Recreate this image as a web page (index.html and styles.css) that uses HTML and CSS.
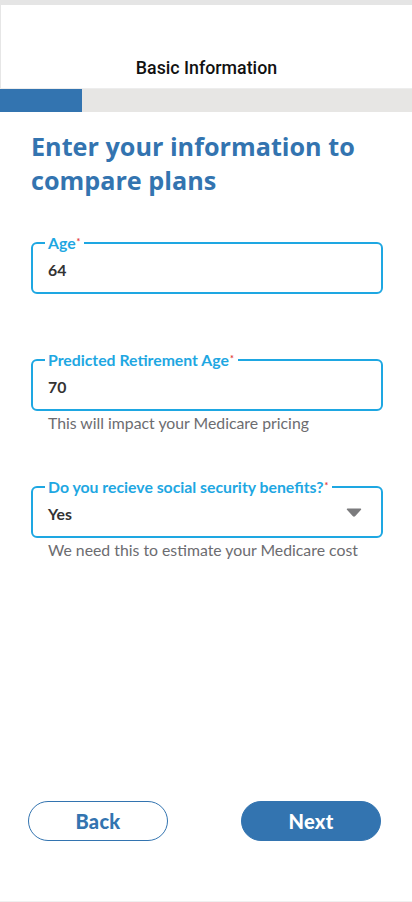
FILE: index.html
```html
<!DOCTYPE html>
<html lang="en">
<head>
<meta charset="utf-8">
<title>Basic Information</title>
<link rel="stylesheet" href="styles.css">
</head>
<body>
<div class="page">
  <div class="topstrip"></div>
  <header class="header"><h1 class="header-title">Basic Information</h1></header>
  <div class="progress"><div class="progress-fill" style="width:82px"></div></div>
  <main class="content">
    <h2 class="heading">Enter your information to compare plans</h2>
    <div class="group group-first">
      <div class="field">
        <span class="label">Age<sup class="req">*</sup></span>
        <span class="value">64</span>
      </div>
    </div>
    <div class="group group-second">
      <div class="field">
        <span class="label">Predicted Retirement Age<sup class="req">*</sup></span>
        <span class="value">70</span>
      </div>
      <p class="helper">This will impact your Medicare pricing</p>
    </div>
    <div class="group group-third">
      <div class="field field-select">
        <span class="label">Do you recieve social security benefits?<sup class="req">*</sup></span>
        <span class="value">Yes</span>
        <svg class="caret" width="16" height="9" viewBox="0 0 16 9"><path d="M1.5 1.2 H14.5 L8.8 7.6 Q8 8.4 7.2 7.6 Z" fill="#7b7b7d" stroke="#7b7b7d" stroke-width="1.4" stroke-linejoin="round"/></svg>
      </div>
      <p class="helper">We need this to estimate your Medicare cost</p>
    </div>
  </main>
  <footer class="actions">
    <button class="btn btn-outline">Back</button>
    <button class="btn btn-fill">Next</button>
  </footer>
  <div class="bottomline"></div>
</div>
</body>
</html>
```

FILE: styles.css
```css
html, body {
  margin: 0;
  padding: 0;
  background: #ffffff;
}
.page {
  width: 412px;
  height: 902px;
  display: flex;
  flex-direction: column;
  box-sizing: border-box;
}
.topstrip {
  height: 5px;
  background: #e5e5e5;
}
.header {
  height: 83px;
  display: flex;
  align-items: flex-end;
  justify-content: center;
  border-left: 1px solid #e6e6e6;
  box-sizing: border-box;
}
.header-title {
  margin: 0 0 9px 0;
  font-family: Roboto, "Liberation Sans", sans-serif;
  font-weight: 500;
  font-size: 17.8px;
  line-height: 22px;
  color: #111111;
}
.progress {
  height: 24px;
  background: #e7e6e4;
  display: flex;
  border-top: 1px solid #ededed;
  box-sizing: border-box;
}
.progress-fill {
  height: 100%;
  background: #3374b0;
}
.content {
  padding: 17px 29px 0 31px;
}
.heading {
  margin: 0;
  font-family: "Open Sans", Lato, sans-serif;
  font-weight: 700;
  font-size: 25.2px;
  line-height: 34px;
  letter-spacing: 0;
  color: #3374b0;
}
.group-first { margin-top: 45px; }
.group-second { margin-top: 65px; }
.group-third { margin-top: 54px; }
.field {
  position: relative;
  height: 52px;
  border: 2px solid #1ea7e2;
  border-radius: 6px;
  box-sizing: border-box;
  display: flex;
  align-items: center;
  padding: 0 15px;
}
.label {
  position: absolute;
  top: -11px;
  left: 12px;
  padding: 0 4px 0 3px;
  background: #ffffff;
  font-family: Lato, "Open Sans", sans-serif;
  font-weight: 700;
  font-size: 15.8px;
  line-height: 19px;
  color: #1ea7e2;
}
.req {
  color: #e23b3b;
  font-size: 9px;
  vertical-align: top;
  position: relative;
  top: -1px;
  margin-left: 1px;
}
.value {
  font-family: Lato, "Open Sans", sans-serif;
  font-weight: 700;
  font-size: 15.8px;
  color: #333333;
  padding-top: 2px;
}
.field-select {
  justify-content: space-between;
}
.caret {
  margin-right: 4px;
}
.helper {
  margin: 3px 0 0 17px;
  font-family: Lato, "Open Sans", sans-serif;
  font-size: 15.8px;
  line-height: 18px;
  color: #6c6c70;
}
.actions {
  margin-top: auto;
  display: flex;
  justify-content: space-between;
  padding: 0 31px 60px 28px;
}
.btn {
  width: 140px;
  height: 40px;
  border-radius: 20px;
  font-family: Lato, "Open Sans", sans-serif;
  font-weight: 900;
  font-size: 20px;
  letter-spacing: 0.3px;
  cursor: pointer;
  padding: 0;
}
.btn-outline {
  background: #ffffff;
  color: #3374b0;
  border: 1.5px solid #3374b0;
}
.btn-fill {
  background: #3374b0;
  color: #ffffff;
  border: 1.5px solid #3374b0;
}
.bottomline {
  height: 1px;
  background: #f0f0f0;
}
```
